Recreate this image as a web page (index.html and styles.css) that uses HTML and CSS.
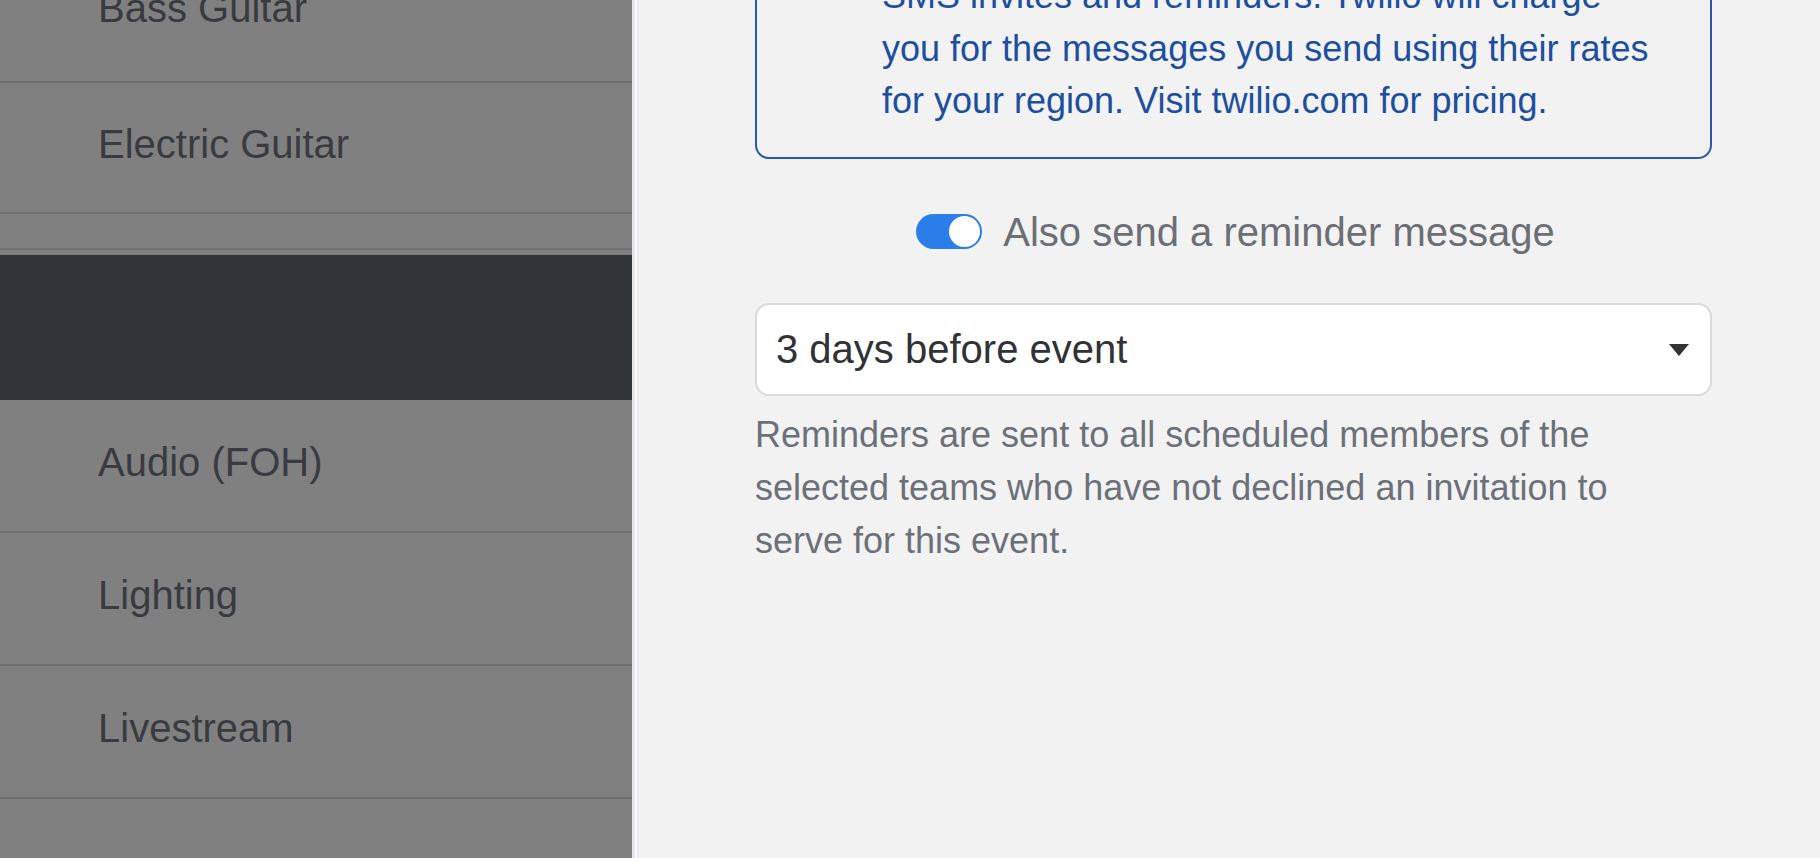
FILE: index.html
```html
<!DOCTYPE html>
<html lang="en">
<head>
<meta charset="utf-8">
<title>Reminder settings</title>
<link rel="stylesheet" href="styles.css">
</head>
<body>
<div class="layout">
  <aside class="sidebar">
    <div class="team-row first"><span>Bass Guitar</span></div>
    <div class="team-row"><span>Electric Guitar</span></div>
    <div class="group-gap"></div>
    <div class="team-row active"></div>
    <div class="team-row low"><span>Audio (FOH)</span></div>
    <div class="team-row low"><span>Lighting</span></div>
    <div class="team-row low"><span>Livestream</span></div>
    <div class="team-row low"></div>
  </aside>
  <div class="edge"></div>
  <main class="panel">
    <div class="content">
      <div class="notice">
        SMS invites and reminders. Twilio will charge<br>
        you for the messages you send using their rates<br>
        for your region. Visit twilio.com for pricing.
      </div>
      <div class="switch-row">
        <span class="switch"><span class="knob"></span></span>
        <span class="switch-label">Also send a reminder message</span>
      </div>
      <div class="select">
        <span>3 days before event</span>
        <span class="caret"></span>
      </div>
      <p class="help">Reminders are sent to all scheduled members of the<br>selected teams who have not declined an invitation to<br>serve for this event.</p>
    </div>
  </main>
</div>
</body>
</html>
```

FILE: styles.css
```css
html, body {
  margin: 0;
  padding: 0;
  height: 100%;
  overflow: hidden;
}
body {
  font-family: "Liberation Sans", Arial, Helvetica, sans-serif;
  background: #f2f2f2;
}
.layout {
  display: flex;
  height: 858px;
  overflow: hidden;
}
.sidebar {
  width: 632px;
  flex: none;
  background: #808080;
  display: flex;
  flex-direction: column;
  overflow: hidden;
}
.team-row {
  flex: none;
  box-sizing: border-box;
  height: 131px;
  border-bottom: 2px solid #6f6f6f;
  display: flex;
  align-items: center;
  padding-left: 98px;
  padding-bottom: 8px;
  font-size: 40px;
  color: #393b40;
}
.team-row span {
  line-height: 46px;
}
.team-row.first {
  height: 135px;
  margin-top: -52px;
  padding-bottom: 14px;
}
.group-gap {
  flex: none;
  height: 34px;
  border-bottom: 2px solid #727272;
  margin-bottom: 5px;
}
.team-row.active {
  height: 145px;
  background: #313438;
  border-bottom: none;
}
.team-row.low {
  height: 133px;
}
.edge {
  width: 7px;
  flex: none;
  background: linear-gradient(to right, #e6e6ea 0 3px, #fafafa 3px 5px, #ececf0 5px);
}
.panel {
  flex: 1;
  background: #f2f2f2;
}
.content {
  width: 957px;
  margin-left: 116px;
}
.notice {
  margin-top: -62px;
  border: 2px solid #2a5ba6;
  border-radius: 14px;
  padding: 30px 20px 29px 125px;
  font-size: 36px;
  line-height: 52.5px;
  color: #1d4f9e;
  white-space: nowrap;
}
.switch-row {
  margin-top: 47px;
  height: 52px;
  display: flex;
  align-items: center;
  justify-content: center;
  gap: 21px;
  padding-left: 4px;
}
.switch {
  box-sizing: border-box;
  width: 66px;
  height: 35px;
  border-radius: 18px;
  background: #2b7de9;
  display: flex;
  align-items: center;
  justify-content: flex-end;
  padding: 0 2px;
}
.knob {
  width: 31px;
  height: 31px;
  border-radius: 50%;
  background: #ffffff;
}
.switch-label {
  font-size: 40px;
  line-height: 52px;
  color: #6c6f76;
}
.select {
  margin-top: 45px;
  box-sizing: border-box;
  height: 93px;
  border: 2px solid #dadada;
  border-radius: 14px;
  background: #ffffff;
  display: flex;
  align-items: center;
  justify-content: space-between;
  padding: 0 21px 0 19px;
  font-size: 40px;
  color: #303236;
}
.caret {
  width: 0;
  height: 0;
  border-left: 10px solid transparent;
  border-right: 10px solid transparent;
  border-top: 12px solid #333333;
  margin-top: 2px;
}
.help {
  margin: 12px 0 0 0;
  font-size: 36px;
  line-height: 53px;
  color: #6c7079;
  white-space: nowrap;
}
```
